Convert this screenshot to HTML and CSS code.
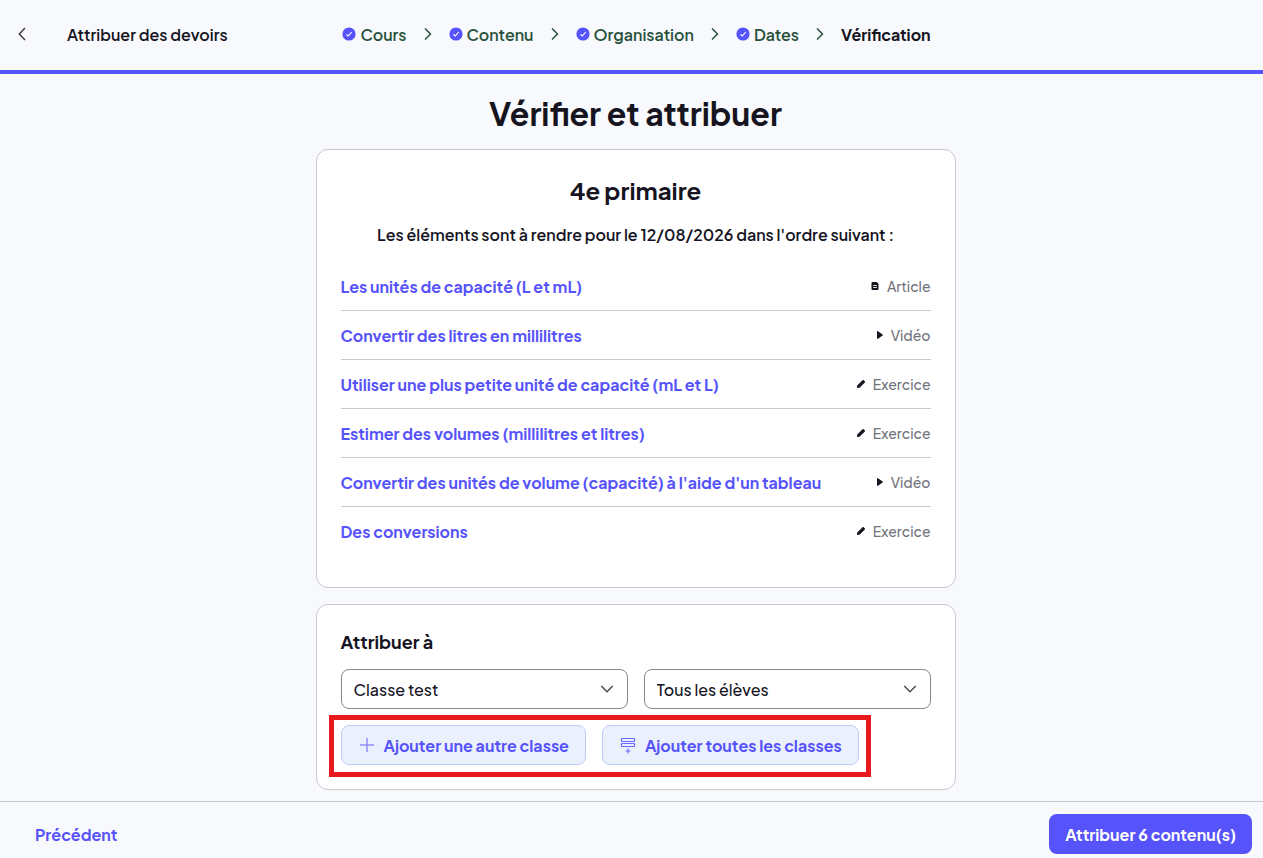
FILE: index.html
```
<!DOCTYPE html>
<html lang="fr">
<head>
<meta charset="utf-8">
<meta name="viewport" content="width=device-width, initial-scale=1">
<title>Attribuer des devoirs</title>
<link rel="stylesheet" href="styles.css">
</head>
<body>
<svg class="sprite" aria-hidden="true">
  <symbol id="check" viewBox="0 0 14 14"><circle cx="7" cy="7" r="6.6" fill="#5753fa"/><path d="M4.4 7.3 6.2 9l3.5-3.8" fill="none" stroke="#fff" stroke-width="1.1"/></symbol>
  <symbol id="next" viewBox="0 0 8 14"><path d="M1 1.5 6.5 7 1 12.5" fill="none" stroke="currentColor" stroke-width="1.5"/></symbol>
  <symbol id="down" viewBox="0 0 14 8"><path d="M1.3 1 7 6.7 12.7 1" fill="none" stroke="currentColor" stroke-width="1.5"/></symbol>
  <symbol id="article" viewBox="0 0 8 8"><path d="M1.200 0h4.300L7.500 1.600V7a1 1 0 0 1-1 1H1.500a1 1 0 0 1-1-1V1a1 1 0 0 1 1-1z" fill="#15141f"/><path d="M2 3.500h4M2 5.500h4" stroke="#fff" stroke-width=".8"/></symbol>
  <symbol id="video" viewBox="0 0 6 8"><path d="M0 .8C0 .2.6-.1 1 .2l4.6 3.2c.4.3.4.9 0 1.200L1 7.800C.6 8.100 0 7.800 0 7.200z" fill="#15141f"/></symbol>
  <symbol id="exercise" viewBox="0 0 8 8"><path d="M0 8 .2 5.500 5.300.4c.5-.5 1.100-.5 1.600 0l.7.7c.5.5.5 1.100 0 1.600L2.500 7.800z" fill="#15141f"/></symbol>
</svg>
<header class="topbar">
  <div class="topbar-left">
    <button class="back" type="button" aria-label="Retour"><svg viewBox="0 0 8 14" width="8" height="14"><path d="M7 1 1.300 7 7 13" fill="none" stroke="currentColor" stroke-width="1.500"/></svg></button>
    <span class="topbar-title">Attribuer des devoirs</span>
  </div>
  <nav aria-label="Étapes">
    <ol class="steps">
      <li class="step"><svg class="check"><use href="#check"/></svg><span>Cours</span><svg class="next"><use href="#next"/></svg></li>
      <li class="step"><svg class="check"><use href="#check"/></svg><span>Contenu</span><svg class="next"><use href="#next"/></svg></li>
      <li class="step"><svg class="check"><use href="#check"/></svg><span>Organisation</span><svg class="next"><use href="#next"/></svg></li>
      <li class="step"><svg class="check"><use href="#check"/></svg><span>Dates</span><svg class="next"><use href="#next"/></svg></li>
      <li class="step current" aria-current="step">Vérification</li>
    </ol>
  </nav>
</header>
<main class="content">
  <h1 class="page-title">Vérifier et attribuer</h1>
  <section class="card">
    <h2 class="class-name">4e primaire</h2>
    <p class="intro">Les éléments sont à rendre pour le 12/08/2026 dans l'ordre suivant :</p>
    <ul class="items">
      <li class="item"><a href="#">Les unités de capacité (L et mL)</a><span class="kind"><svg width="8" height="8"><use href="#article"/></svg>Article</span></li>
      <li class="item"><a href="#">Convertir des litres en millilitres</a><span class="kind"><svg width="6" height="8"><use href="#video"/></svg>Vidéo</span></li>
      <li class="item"><a href="#">Utiliser une plus petite unité de capacité (mL et L)</a><span class="kind"><svg width="8" height="8"><use href="#exercise"/></svg>Exercice</span></li>
      <li class="item"><a href="#">Estimer des volumes (millilitres et litres)</a><span class="kind"><svg width="8" height="8"><use href="#exercise"/></svg>Exercice</span></li>
      <li class="item"><a href="#">Convertir des unités de volume (capacité) à l'aide d'un tableau</a><span class="kind"><svg width="6" height="8"><use href="#video"/></svg>Vidéo</span></li>
      <li class="item"><a href="#">Des conversions</a><span class="kind"><svg width="8" height="8"><use href="#exercise"/></svg>Exercice</span></li>
    </ul>
  </section>
  <section class="card">
    <h3 class="assign-title">Attribuer à</h3>
    <div class="selects">
      <div class="select"><select aria-label="Classe"><option>Classe test</option></select><svg><use href="#down"/></svg></div>
      <div class="select"><select aria-label="Élèves"><option>Tous les élèves</option></select><svg><use href="#down"/></svg></div>
    </div>
    <div class="add-actions">
      <button class="add" type="button"><svg width="20" height="20" viewBox="0 0 20 20"><path d="M10 3v14M3 10h14" stroke="#8f8dfb" stroke-width="1.500"/></svg>Ajouter une autre classe</button>
      <button class="add" type="button"><svg width="20" height="20" viewBox="0 0 20 20" fill="none" stroke="#6c68fa" stroke-width="1.200"><rect x="3.500" y="3.500" width="13" height="3" rx=".5"/><rect x="3.500" y="8.500" width="13" height="3" rx=".5"/><path d="M10 13.500v5M7.500 16h5"/></svg>Ajouter toutes les classes</button>
    </div>
  </section>
</main>
<footer class="bottombar">
  <a class="previous" href="#">Précédent</a>
  <button class="submit" type="button">Attribuer 6 contenu(s)</button>
</footer>
</body>
</html>
```
FILE: styles.css
```
* { box-sizing: border-box; }
body {
  margin: 0;
  min-height: 100vh;
  display: flex;
  flex-direction: column;
  background: #f8f9fc;
  color: #15141f;
  font: 600 16px/24px "Plus Jakarta Sans", Inter, sans-serif;
}
button, select { font: inherit; color: inherit; }
button { cursor: pointer; }
a { color: #5753fa; text-decoration: none; }
h1, h2, h3, p, ul, ol { margin: 0; padding: 0; }
ul, ol { list-style: none; }
.sprite { display: none; }

.topbar {
  display: grid;
  grid-template-columns: 1fr auto 1fr;
  align-items: center;
  min-height: 74px;
  padding: 0 8px 0 18px;
  border-bottom: 4px solid #5753fa;
}
.topbar-left { display: flex; align-items: center; gap: 41px; }
.back { display: flex; padding: 0; border: 0; background: none; color: #3d3e46; }
.steps { display: flex; gap: 17px; }
.step { display: flex; align-items: center; color: #28513b; }
.check { width: 14px; height: 14px; margin-right: 4px; }
.next { width: 8px; height: 14px; margin-left: 17px; }
.back svg, .check, .next { margin-bottom: 2px; }
.current { color: #15141f; font-weight: 700; }

.content {
  flex: 1;
  display: flex;
  flex-direction: column;
  align-items: center;
  gap: 16px;
  padding: 19px 0 11px 8px;
}
.page-title { font-size: 32px; line-height: 40px; font-weight: 700; }
.card {
  width: 100%;
  max-width: 640px;
  padding: 24px;
  border: 1px solid #c8c9cd;
  border-radius: 12px;
  background: #fff;
}
.class-name { font-size: 24px; line-height: 32px; font-weight: 700; text-align: center; }
.intro { margin: 17px 0 15px; text-align: center; }
.items { margin-bottom: 8px; }
.item {
  display: flex;
  justify-content: space-between;
  align-items: center;
  gap: 16px;
  padding: 11px 0;
  font-weight: 700;
}
.item a { padding-top: 2px; }
.item + .item { border-top: 1px solid #c8c9cd; }
.kind { display: flex; align-items: center; gap: 8px; color: #72747d; font-size: 14px; font-weight: 500; }

.assign-title { padding-top: 1px; font-size: 18px; font-weight: 700; }
.selects { display: grid; grid-template-columns: 1fr 1fr; gap: 16px; margin: 15px 0 16px; }
.select { position: relative; }
.select select {
  appearance: none;
  width: 100%;
  height: 40px;
  padding: 2px 36px 0 12px;
  border: 1px solid #85868f;
  border-radius: 8px;
  background: #fff;
  font-weight: 500;
}
.select svg {
  position: absolute;
  top: 16px;
  right: 14px;
  width: 14px;
  height: 8px;
  color: #4a4b53;
  pointer-events: none;
}
.add-actions { position: relative; display: flex; gap: 16px; width: fit-content; }
.add-actions::after {
  content: "";
  position: absolute;
  inset: -10px -12px -12px;
  border: 5px solid #e8191d;
  pointer-events: none;
}
.add {
  display: flex;
  align-items: center;
  gap: 7px;
  height: 40px;
  padding: 2px 16px 0 15px;
  border: 1px solid #bfcafd;
  border-radius: 8px;
  background: #eaf1fd;
  color: #5753fa;
  font-weight: 700;
  white-space: nowrap;
}
.add svg { margin-bottom: 2px; }

.bottombar {
  display: flex;
  justify-content: space-between;
  align-items: center;
  padding: 12px 11px 4px 35px;
  border-top: 1px solid #c8c9cd;
  font-weight: 700;
}
.previous { padding-top: 2px; }
.submit {
  height: 40px;
  padding: 2px 16px 0;
  border: 0;
  border-radius: 8px;
  background: #5753fa;
  color: #fff;
}
```
